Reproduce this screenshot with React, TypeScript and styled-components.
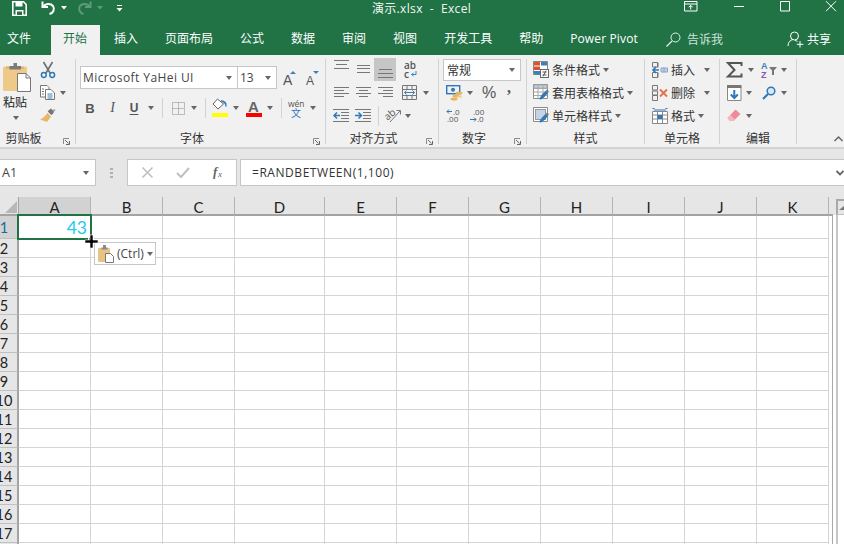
import React from "react";
import styled, { createGlobalStyle } from "styled-components";

const Global = createGlobalStyle`
  html, body { margin: 0; padding: 0; background: #e6e6e6; overflow: hidden; }
  * { box-sizing: border-box; }
`;
const FONT = `"Open Sans", "Noto Sans CJK SC", sans-serif`;
const GREEN = "#217346";

const Page = styled.div`
  width: 844px; height: 544px; overflow: hidden; background: #e6e6e6;
  font-family: ${FONT}; font-size: 12px; color: #333;
  display: flex; flex-direction: column;
`;
const TitleBar = styled.div`
  height: 25px; background: ${GREEN}; color: #fff;
  display: grid; grid-template-columns: 1fr auto 1fr; flex: none;
`;
const Qat = styled.div`display: flex; align-items: flex-start; padding: 1px 0 0 12px;`;
const QatItem = styled.span<{ $ml?: number; $mt?: number }>`
  display: inline-flex; margin-left: ${p => p.$ml ?? 0}px; margin-top: ${p => p.$mt ?? 0}px;
`;
const DocName = styled.div`font-size: 12px; line-height: 15px; letter-spacing: .35px; white-space: pre; color: #f2f7f4; margin-left: -1px; padding-top: 1px;`;
const WinButtons = styled.div`display: flex; justify-content: flex-end; padding: 1px 8px 0 0; gap: 36px;`;
const WinButton = styled.span`display: inline-flex; width: 10px; justify-content: center;`;

const TabBar = styled.div`
  height: 30px; background: ${GREEN}; display: flex; flex: none; align-items: stretch;
  margin-left: -5px; color: #fff; width: 849px;
`;
const Tab = styled.div<{ $active?: boolean; $mr?: number }>`
  padding: 0 13px 2px 12px; margin-right: ${p => p.$mr ?? 2}px;
  display: flex; align-items: center; white-space: pre; line-height: 16px;
  background: ${p => (p.$active ? "#f1f1f1" : "transparent")};
  color: ${p => (p.$active ? GREEN : "#fff")};
`;
const PowerTab = styled(Tab)`letter-spacing: .14px;`;
const TellMe = styled.div`display: flex; align-items: center; gap: 6px; margin-left: 13px; color: #cfe2d8; padding-bottom: 2px;`;
const Share = styled.div`display: flex; align-items: center; gap: 3px; margin-left: 64px; padding-bottom: 2px;`;

const Ribbon = styled.div`
  height: 94px; flex: none; background: #f1f1f1; border-bottom: 2px solid #d2d2d2;
  display: flex; align-items: stretch;
`;
const Group = styled.div<{ $w: number }>`
  width: ${p => p.$w}px; flex: none; display: flex; flex-direction: column;
`;
const Body = styled.div<{ $pt?: number; $pl?: number }>`
  height: 76px; flex: none; display: flex; flex-direction: column;
  padding-top: ${p => p.$pt ?? 3}px; padding-left: ${p => p.$pl ?? 0}px;
`;
const ClipBody = styled(Body)`flex-direction: row;`;
const PasteCol = styled.div`width: 36px; display: flex; flex-direction: column; padding: 5px 0 0 3px;`;
const PasteText = styled.div`font-size: 12px; line-height: 16px; margin-top: 3px; width: 26px; color: #222; letter-spacing: 0;`;
const PasteCaret = styled.div`display: flex; margin: 5px 0 0 10px;`;
const SmallCol = styled.div`display: flex; flex-direction: column;`;
const Row = styled.div<{ $h?: number; $mt?: number }>`
  height: ${p => p.$h ?? 23}px; margin-top: ${p => p.$mt ?? 0}px; display: flex; align-items: center; flex: none;
`;
const Tool = styled.span<{ $w: number; $ml?: number }>`
  width: ${p => p.$w}px; margin-left: ${p => p.$ml ?? 0}px; flex: none;
  display: inline-flex; align-items: center; justify-content: center; height: 100%;
`;
const Pressed = styled(Tool)`background: #c6c6c6;`;
const Caret = styled.span<{ $ml?: number }>`
  width: 0; height: 0; flex: none; margin-left: ${p => p.$ml ?? 0}px;
  border-left: 3.5px solid transparent; border-right: 3.5px solid transparent; border-top: 4px solid #666;
`;
const Label = styled.div`height: 15px; display: flex; align-items: center; line-height: 15px; color: #333;`;
const LabelText = styled.div<{ $pr?: number }>`flex: 1; text-align: center; padding-right: ${p => p.$pr ?? 0}px; white-space: nowrap;`;
const LauncherBox = styled.span`margin: 6px 5px 0 0; display: inline-flex;`;
const GroupSep = styled.div`width: 1px; flex: none; margin: 4px 0 3px; background: #d2d2d2;`;
const ToolSep = styled.span<{ $ml?: number; $mr?: number; $h?: number }>`
  width: 1px; height: ${p => p.$h ?? 20}px; background: #d2d2d2; flex: none;
  margin-left: ${p => p.$ml ?? 0}px; margin-right: ${p => p.$mr ?? 0}px;
`;
const Rest = styled.div`flex: 1; display: flex; align-items: flex-end; justify-content: flex-end; padding: 0 1px 5px 0;`;

const Field = styled.div<{ $w: number; $ml?: number }>`
  width: ${p => p.$w}px; height: 100%; background: #fff; border: 1px solid #c6c6c6; margin-left: ${p => p.$ml ?? 0}px;
  display: flex; align-items: center; justify-content: space-between; padding: 0 5px 0 2px; flex: none; color: #444;
`;
const FontName = styled.span`letter-spacing: .42px;`;
const NumberSelect = styled(Field)`height: 22px; color: #333; padding-left: 3px;`;
const BoldGlyph = styled.span`font: 700 13px "Liberation Sans", sans-serif; color: #555;`;
const ItalicGlyph = styled.span`font: italic 400 14px "Liberation Serif", serif; color: #555;`;
const UnderGlyph = styled.span`font: 700 12px "Liberation Sans", sans-serif; color: #555; text-decoration: underline; text-underline-offset: 2px;`;
const Percent = styled.span`font: 400 16px "Liberation Sans", sans-serif; color: #555;`;
const Comma = styled.span`font: 700 16px "Liberation Serif", serif; color: #555; margin-top: -9px;`;
const Action = styled.div<{ $pl: number }>`display: flex; align-items: center; gap: 3px; padding-left: ${p => p.$pl}px; height: 23px; color: #333; white-space: nowrap; flex: none;`;

const FormulaRow = styled.div`
  height: 27px; flex: none; margin-top: 10px; display: flex; align-items: stretch;
`;
const NameBox = styled.div`
  width: 96px; background: #fff; border: 1px solid #c6c6c6; border-left: none; display: flex; align-items: center;
  justify-content: space-between; padding: 0 6px 0 2px; font-size: 12.5px; color: #444;
`;
const Grip = styled.div`width: 31px; display: flex; align-items: center; justify-content: center;`;
const FxBox = styled.div`
  width: 110px; background: #fff; border: 1px solid #c6c6c6; display: grid; grid-template-columns: 36px 36px 36px; align-items: center; justify-items: center; padding-left: 1px;
`;
const FormulaInput = styled.div`
  margin-left: 3px; flex: 1; background: #fff; border: 1px solid #c6c6c6; border-right: none;
  display: flex; align-items: center; justify-content: space-between; padding: 0 0 0 11px; color: #333; font-size: 12px;
`;
const FormulaText = styled.span`letter-spacing: .55px;`;
const ExpandBox = styled.span`display: inline-flex; margin-right: 0;`;

const SheetWrap = styled.div`flex: 1; margin-top: 11px; position: relative; display: flex; min-height: 0;`;
const Sheet = styled.div`
  width: 833px; display: grid; flex: none; overflow: hidden; background: #fff; align-content: start;
  grid-template-columns: 19px 72px 72px 72px 90px repeat(7, 72px) 4px;
  grid-template-rows: 19px 23px repeat(17, 19px);
  font-family: Lato, "Open Sans", sans-serif;
`;
const Corner = styled.div`
  background: #e6e6e6; border-bottom: 2px solid #a3a3a3; border-right: 1px solid #a3a3a3; display: flex; align-items: flex-end; justify-content: flex-end; padding: 0 1px 1px 0;
`;
const ColHead = styled.div<{ $sel?: boolean }>`
  background: ${p => (p.$sel ? "#d2d2d2" : "#e6e6e6")}; border-right: 1px solid #b4b4b4; border-bottom: 2px solid #a3a3a3;
  color: #222; font-size: 15px; line-height: 20px; text-align: center;
`;
const HeadGutter = styled.div`background: #e6e6e6; border-bottom: 2px solid #a3a3a3;`;
const Gutter = styled.div`background: #fff; border-right: 1px solid #a8a8a8;`;
const RowHead = styled.div<{ $sel?: boolean }>`
  background: ${p => (p.$sel ? "#d2d2d2" : "#e6e6e6")}; border-right: 2px solid #a3a3a3; border-bottom: 1px solid #c0c0c0;
  color: #222; font-size: 14.5px; display: flex; align-items: center; padding-top: 2px;
`;
const RowNum = styled.span<{ $sel?: boolean }>`
  width: 8px; display: flex; justify-content: center; line-height: 18px; white-space: nowrap; flex: none;
  ${p => (p.$sel ? "color: #0f6fa0;" : "")}
`;
const Cell = styled.div`border-right: 1px solid #d4d4d4; border-bottom: 1px solid #d4d4d4; background: #fff;`;
const ValueCell = styled(Cell)`
  color: #22c8ef; font-size: 17.5px; line-height: 24px; text-align: right; padding-right: 3px;
`;
const SelBox = styled.div`
  position: absolute; left: 17px; top: 17px; width: 75px; height: 26px; border: 2px solid ${GREEN}; pointer-events: none;
`;
const FillHandle = styled.div`
  position: absolute; left: 88px; top: 40px; width: 6px; height: 6px; background: ${GREEN}; border: 1px solid #fff;
`;
const CursorMark = styled.span`position: absolute; left: 85px; top: 38px; display: inline-flex;`;
const PasteTag = styled.div`
  position: absolute; left: 94px; top: 45px; width: 62px; height: 23px; background: #fff; border: 1px solid #c6c6c6;
  display: flex; align-items: center; gap: 3px; padding-left: 3px; color: #444; font: 12px "Open Sans", sans-serif;
`;
const ScrollTrack = styled.div`flex: 1; display: flex; flex-direction: column; background: #fff;`;
const ScrollCap = styled.div`height: 18px; flex: none; background: #e6e6e6; padding: 2px 0 0 3px; display: flex;`;
const ScrollUp = styled.div`
  flex: 1; border-top: 2px solid #a8a8a8; border-left: 2px solid #a8a8a8; border-bottom: 1px solid #c0c0c0; background: #e6e6e6;
  display: flex; align-items: center; justify-content: flex-end; padding-right: 0;
`;
const ScrollRail = styled.div`flex: 1; margin-left: 3px; border-left: 2px solid #c6c6c6; background: #fff;`;

const Svg: React.FC<React.PropsWithChildren<{ w: number; h: number }>> = ({ w, h, children }) => (
  <svg width={w} height={h} viewBox={`0 0 ${w} ${h}`} style={{ display: "block", flex: "none", overflow: "visible" }}>{children}</svg>
);

const SaveIcon = () => (
  <Svg w={15} h={15}>
    <path d="M.8.8h10.7l2.700 2.700v10.700H.8z" fill="none" stroke="#fff" strokeWidth="1.600" />
    <path d="M3.500 1h7v4.500h-7zM3.500 9h8v5h-8z" fill="#fff" />
    <path d="M5 10.500h5v3.500H5z" fill={GREEN} />
  </Svg>
);
const UndoIcon = ({ dim }: { dim?: boolean }) => (
  <Svg w={15} h={14}>
    <g fill="none" stroke={dim ? "#5d9a7c" : "#fff"} strokeWidth="2" transform={dim ? "translate(15 0) scale(-1 1)" : undefined}>
      <path d="M1.500 .5v5.500h5.500" />
      <path d="M2 6C4 2.500 9.500 2 12 5c2 3 .5 7-3.500 8" />
    </g>
  </Svg>
);
const MiniCaret = ({ c = "#fff" }: { c?: string }) => (
  <Svg w={6} h={4}><path d="M0 0h6L3 3.500z" fill={c} /></Svg>
);
const QatMore = () => (
  <Svg w={7} h={7}><path d="M1 0h5v1H1zM.5 3h6L3.500 6.500z" fill="#fff" /></Svg>
);
const DisplayIcon = () => (
  <Svg w={14} h={11}>
    <path d="M.5.500h12.500v9.500H.5zM.5 3h12.500" fill="none" stroke="#fff" />
    <path d="M6.700 8.500V4.500M4.700 6.300l2-2 2 2" fill="none" stroke="#fff" />
  </Svg>
);
const MinIcon = () => <Svg w={10} h={11}><path d="M0 5.500h10" stroke="#fff" /></Svg>;
const MaxIcon = () => <Svg w={10} h={11}><path d="M.5.500h9v9.500h-9z" fill="none" stroke="#fff" /></Svg>;
const CloseIcon = () => <Svg w={10} h={11}><path d="M0 .2l10 10M10 .2l-10 10" stroke="#fff" /></Svg>;
const SearchIcon = () => (
  <Svg w={15} h={15}>
    <circle cx="9.500" cy="5.500" r="4.500" fill="none" stroke="#e6f0eb" />
    <path d="M6 9l-5.500 5.500" stroke="#e6f0eb" strokeWidth="1.300" />
  </Svg>
);
const PersonIcon = () => (
  <Svg w={17} h={17}>
    <circle cx="7.500" cy="5" r="4" fill="none" stroke="#fff" />
    <path d="M1 15c0-4 2.500-6 5-6.500M8 9.500c1 .2 2 .5 2.500 1" fill="none" stroke="#fff" />
    <path d="M13 10v6.500M9.800 13.300h6.500" stroke="#fff" />
  </Svg>
);

const PasteIcon = () => (
  <Svg w={28} h={29}>
    <rect x="0" y="3.500" width="24" height="24.500" rx="1.500" fill="#eec987" />
    <path d="M3 3.500h18v2.500H3z" fill="#dcb877" />
    <path d="M6.500 3h4V0h3.500v3h4v3.500h-11.500z" fill="#7a7a7a" />
    <path d="M14.500 10.500h8.500l4.500 4.500v13.500h-13z" fill="#fff" stroke="#777" />
    <path d="M23 10.500v4.500h4.500" fill="none" stroke="#777" />
  </Svg>
);
const CutIcon = () => (
  <Svg w={16} h={16}>
    <path d="M3.500 0l6.500 11M12.500 0L6 11" stroke="#6f6f6f" strokeWidth="1.600" />
    <circle cx="3.800" cy="13" r="2.400" fill="none" stroke="#2f78b9" strokeWidth="1.500" />
    <circle cx="12.200" cy="13" r="2.400" fill="none" stroke="#2f78b9" strokeWidth="1.500" />
  </Svg>
);
const CopyIcon = () => (
  <Svg w={15} h={15}>
    <path d="M.5.500h6.500l2 2v9.500H.5z" fill="#fff" stroke="#777" />
    <path d="M5.500 4.500h5.500l3.500 3.500v6.500h-9z" fill="#fff" stroke="#777" />
    <path d="M2 4h2M2 6.500h2M2 9h2" stroke="#777" />
    <path d="M7.500 9h5M7.500 11h5M7.500 13h5" stroke="#3b80bd" />
  </Svg>
);
const BrushIcon = () => (
  <Svg w={16} h={15}>
    <path d="M9 2l2-1.500 3 3-.8 2-2 1.500-3.500-3.500z" fill="#777" />
    <path d="M13.500 1l2 1-2 2z" fill="#8a8a8a" />
    <path d="M7.500 5l3.500 3.500L7 14 0 11.500C3 10.500 5 8 7.500 5z" fill="#e6b66d" />
  </Svg>
);
const Launcher = () => (
  <Svg w={7} h={7}>
    <path d="M.5 6V.5H6" fill="none" stroke="#8a8a8a" />
    <path d="M2 2l3.500 3.500M6.500 3v3.500H3" fill="none" stroke="#666" />
  </Svg>
);
const GrowIcon = ({ down }: { down?: boolean }) => (
  <Svg w={15} h={16}>
    <text x="1" y="14.500" fontFamily="Liberation Sans, sans-serif" fontSize={down ? 12 : 14} fill="#555">A</text>
    <path d={down ? "M8 1h6l-3 3z" : "M8 4l3-3 3 3z"} fill="#3b80bd" />
  </Svg>
);
const BordersIcon = () => (
  <Svg w={13} h={13}>
    <path d="M.5.500h12v12H.5zM6.500.500v12M.5 6.500h12" fill="none" stroke="#888" strokeDasharray="1 1" />
  </Svg>
);
const FillIcon = () => (
  <Svg w={16} h={20}>
    <path d="M5.500 1L1 6l5 5 5.500-5z" fill="#fff" stroke="#666" />
    <path d="M9 2c3 .5 5 1.500 5.500 3.500v3.500c-1 0-1.500-1-1.500-2.500C12 5 11 4 9 3.500z" fill="#3b80bd" />
    <rect x="0" y="15" width="16" height="4" fill="#ffff00" />
  </Svg>
);
const FontColorIcon = () => (
  <Svg w={16} h={20}>
    <text x="2" y="13.500" fontFamily="Liberation Sans, sans-serif" fontWeight="700" fontSize="15" fill="#666">A</text>
    <rect x="0" y="15" width="16" height="4" fill="#ff0000" />
  </Svg>
);
const WenIcon = () => (
  <Svg w={17} h={17}>
    <text x="0" y="7" fontFamily="Open Sans, sans-serif" fontSize="8.500" fill="#555">wén</text>
    <text x="3" y="17" fontFamily="Noto Sans CJK SC, sans-serif" fontSize="10" fill="#2f78b9">文</text>
  </Svg>
);
const Lines = ({ ys, xs }: { ys: number[]; xs: [number, number][] }) => (
  <Svg w={15} h={23}>
    {ys.map((y, i) => (
      <path key={y} d={`M${xs[i][0]} ${y}.5H${xs[i][1]}`} stroke="#777" />
    ))}
  </Svg>
);
const full: [number, number] = [0, 15];
const AlignTop = () => <Lines ys={[2, 6, 10]} xs={[full, [2, 13], full]} />;
const AlignMid = () => <Lines ys={[7, 10, 14]} xs={[[1, 14], [1, 14], [1, 14]]} />;
const AlignBot = () => <Lines ys={[11, 15, 19]} xs={[[1, 14], full, full]} />;
const AlignL = () => <Lines ys={[6, 9, 12, 15]} xs={[full, [0, 10], full, [0, 10]]} />;
const AlignC = () => <Lines ys={[6, 9, 12, 15]} xs={[full, [3, 12], full, [3, 12]]} />;
const AlignR = () => <Lines ys={[6, 9, 12, 15]} xs={[full, [5, 15], full, [5, 15]]} />;
const WrapIcon = () => (
  <Svg w={13} h={17}>
    <text x="0" y="8" fontFamily="Open Sans, sans-serif" fontWeight="600" fontSize="10" fill="#555">ab</text>
    <text x="0" y="16.500" fontFamily="Open Sans, sans-serif" fontWeight="600" fontSize="10" fill="#555">c</text>
    <path d="M12 10v3.500H8M9.500 12l-2 1.500 2 1.500" fill="none" stroke="#3b80bd" />
  </Svg>
);
const MergeIcon = () => (
  <Svg w={15} h={15}>
    <path d="M.5.500h14v14H.5zM.5 4.500h14M.5 10.500h14M5 .5v4M10 .5v4M5 10.500v4M10 10.500v4" fill="none" stroke="#777" />
    <path d="M2.500 7.500h10M4.500 5.500l-2 2 2 2M10.500 5.500l2 2-2 2" fill="none" stroke="#3b80bd" />
  </Svg>
);
const IndentIcon = ({ dir }: { dir: "in" | "out" }) => (
  <Svg w={16} h={13}>
    <path d="M0 .5h16M8 3.500h8M8 6.500h8M8 9.500h8M0 12.500h16" stroke="#777" />
    {dir === "out"
      ? <path d="M7 6.500H1M4 3.500l-3 3 3 3" fill="none" stroke="#2f78b9" strokeWidth="1.500" />
      : <path d="M0 6.500h6M3.500 3.500l3 3-3 3" fill="none" stroke="#2f78b9" strokeWidth="1.500" />}
  </Svg>
);
const OrientIcon = () => (
  <Svg w={17} h={15}>
    <text x="0" y="10" transform="rotate(-40 5 8)" fontFamily="Open Sans, sans-serif" fontSize="10" fill="#555">ab</text>
    <path d="M5 14L15 3M11.500 2.500H15.500V6.500" fill="none" stroke="#777" />
  </Svg>
);
const CurrencyIcon = () => (
  <Svg w={17} h={16}>
    <rect x=".7" y=".7" width="13" height="8" fill="none" stroke="#2f78b9" strokeWidth="1.400" />
    <circle cx="7" cy="4.700" r="2" fill="#2f78b9" />
    <ellipse cx="13" cy="8" rx="3.500" ry="1.500" fill="#e8b55a" />
    <ellipse cx="10" cy="11" rx="3.500" ry="1.500" fill="#e8b55a" />
    <ellipse cx="8" cy="14" rx="3.500" ry="1.500" fill="#e8b55a" />
    <path d="M11 10.500h5v2h-5z" fill="#f0cf8c" />
  </Svg>
);
const DecIcon = ({ inc }: { inc?: boolean }) => (
  <Svg w={16} h={15}>
    <text x={inc ? 7 : 3} y="6.500" fontFamily="Open Sans, sans-serif" fontSize="8" fill="#555">{inc ? ".0" : ".00"}</text>
    <text x={inc ? 1 : 7} y="14" fontFamily="Open Sans, sans-serif" fontSize="8" fill="#555">{inc ? ".00" : ".0"}</text>
    {inc
      ? <path d="M6 3.500H1M3 1.500l-2 2 2 2" fill="none" stroke="#2f78b9" />
      : <path d="M0 11.500h6M4 9.500l2 2-2 2" fill="none" stroke="#2f78b9" />}
  </Svg>
);
const CondIcon = () => (
  <Svg w={16} h={17}>
    <path d="M.5.500h14v13H.5z" fill="#fff" stroke="#888" />
    <rect x="1" y="1" width="6" height="3.500" fill="#d9542b" />
    <rect x="8" y="1" width="6" height="3.500" fill="#3b80bd" />
    <rect x="1" y="5.500" width="6" height="3.500" fill="#d9542b" />
    <rect x="1" y="10" width="6" height="3.500" fill="#3b80bd" />
    <rect x="7.500" y="8.500" width="8" height="8" fill="#fff" stroke="#666" />
    <path d="M9.500 11h4M9.500 14h4M13 9.800l-3 5.500" stroke="#555" />
  </Svg>
);
const TableIcon = ({ cell }: { cell?: boolean }) => (
  <Svg w={16} h={17}>
    <path d="M.5.500h14v14H.5z" fill="#fff" stroke="#8c8c8c" />
    {cell
      ? <rect x="2.500" y="2.500" width="10" height="10" fill="#c4d4e6" stroke="#999" />
      : <path d="M1 1h13v3H1z M.5 4.500h14M.5 8h14M.5 11.500h14M5 .5v14M10 .5v14" fill="#c4d4e6" stroke="#a8a8a8" />}
    <path d="M6 15l3-4.500 3.500-3.500 2.500 2-3.500 4-3.500 2.500z" fill="#2f78b9" />
    <path d="M12.500 7l1.500-1.500 2 2-1.500 1.500z" fill="#777" />
  </Svg>
);
const InsertCellIcon = () => (
  <Svg w={16} h={16}>
    <path d="M.5.500h5v4.500h-5zM.5 10.500h5v5h-5zM6 .5v5M6 10.500v5" fill="none" stroke="#777" />
    <path d="M9 6h6.500v4H9z" fill="#bcd0e6" stroke="#8aa6c6" />
    <path d="M12 5.500v5" stroke="#8aa6c6" />
    <path d="M7 8H1.500M4 5L1 8l3 3" fill="none" stroke="#2f78b9" strokeWidth="1.600" />
  </Svg>
);
const DeleteCellIcon = () => (
  <Svg w={16} h={16}>
    <path d="M.5.500h5v4.500h-5zM.5 10.500h5v5h-5zM.5 6h5v4h-5z" fill="none" stroke="#777" />
    <path d="M8 4.500l7 7M15 4.500l-7 7" stroke="#e0714d" strokeWidth="1.800" />
  </Svg>
);
const FormatCellIcon = () => (
  <Svg w={16} h={16}>
    <path d="M.5.500h2M13.500.5h2M2 2h12" stroke="#2f78b9" fill="none" />
    <path d="M.5 3.500h15v12H.5zM.5 7h15M.5 11h15M5.500 3.500v12M10.500 3.500v12" fill="#fff" stroke="#888" />
    <rect x="5.500" y="7" width="5" height="4" fill="#2f78b9" />
  </Svg>
);
const SigmaIcon = () => (
  <Svg w={15} h={16}>
    <path d="M14.500 4V1H1l6.500 7L1 14.500h13.500v-3" fill="none" stroke="#555" strokeWidth="2" />
  </Svg>
);
const SortIcon = () => (
  <Svg w={16} h={17}>
    <text x="0" y="8" fontFamily="Liberation Sans, sans-serif" fontWeight="700" fontSize="9" fill="#3b80bd">A</text>
    <text x="0" y="17" fontFamily="Liberation Sans, sans-serif" fontWeight="700" fontSize="9" fill="#8a54b8">Z</text>
    <path d="M8 6h8l-3 3.500v4.500h-2V9.500z" fill="#777" />
  </Svg>
);
const FillDownIcon = () => (
  <Svg w={15} h={16}>
    <path d="M.5 2.500h13.500v13H.5z" fill="#fff" stroke="#888" />
    <path d="M0 0h14.500v3H0z" fill="#777" />
    <path d="M7.300 5v8M3.800 9.500l3.500 3.500 3.500-3.500" fill="none" stroke="#2f78b9" strokeWidth="2" />
  </Svg>
);
const FindIcon = () => (
  <Svg w={14} h={14}>
    <circle cx="9" cy="5" r="3.800" fill="#dbe8f4" stroke="#2f78b9" strokeWidth="1.500" />
    <path d="M6 8l-5 5" stroke="#2f78b9" strokeWidth="2.200" />
  </Svg>
);
const EraserIcon = () => (
  <Svg w={14} h={13}>
    <path d="M8.500.500l5 4.500-7 7H3L.5 9z" fill="#ee8b9b" />
    <path d="M.5 9L3 12h3.500L8 10.500 3.500 6z" fill="#f4b7c0" />
  </Svg>
);
const ChevronUp = () => (
  <Svg w={9} h={6}><path d="M.5 5l4-4 4 4" fill="none" stroke="#666" strokeWidth="1.500" /></Svg>
);
const ChevronDown = () => (
  <Svg w={8} h={6}><path d="M.5 1l3.500 3.500L7.500 1" fill="none" stroke="#666" strokeWidth="1.800" /></Svg>
);
const GripIcon = () => (
  <Svg w={3} h={10}><path d="M0 0h3v2H0zM0 4h3v2H0zM0 8h3v2H0z" fill="#b0b0b0" /></Svg>
);
const XIcon = () => <Svg w={11} h={11}><path d="M.5.500l10 10M10.500.500l-10 10" stroke="#c0c0c0" strokeWidth="1.600" /></Svg>;
const CheckIcon = () => <Svg w={14} h={11}><path d="M1 6l4 4 8-9" fill="none" stroke="#c0c0c0" strokeWidth="2" /></Svg>;
const FxIcon = () => (
  <Svg w={12} h={13}>
    <text x="0" y="10" fontFamily="Liberation Serif, serif" fontStyle="italic" fontWeight="700" fontSize="13" fill="#666">f</text>
    <text x="5" y="11" fontFamily="Liberation Serif, serif" fontStyle="italic" fontSize="9" fill="#666">x</text>
  </Svg>
);
const CornerTri = () => <Svg w={12} h={12}><path d="M12 0v12H0z" fill="#b8b8b8" /></Svg>;
const ScrollArrow = () => <Svg w={5} h={4}><path d="M5 0v4H0z" fill="#777" /></Svg>;
const PlusCursor = () => (
  <Svg w={13} h={13}>
    <path d="M5 0h3v5h5v3H8v5H5V8H0V5h5z" fill="#000" stroke="#fff" strokeWidth=".6" />
  </Svg>
);
const PasteMini = () => (
  <Svg w={16} h={18}>
    <rect x="0" y="3" width="12" height="14" rx="1" fill="#e9c382" />
    <path d="M3.500 2.500h1.500V0h3v2.500h1.500v2h-6z" fill="#8a8a8a" />
    <path d="M7.500 8.500h5l3 3v6h-8z" fill="#fff" stroke="#777" />
  </Svg>
);

const COLS = ["A", "B", "C", "D", "E", "F", "G", "H", "I", "J", "K"];
const ROWS = Array.from({ length: 18 }, (_, i) => i + 1);

const Launch = () => <LauncherBox><Launcher /></LauncherBox>;

export default function App() {
  return (
    <Page>
      <Global />
      <TitleBar>
        <Qat>
          <SaveIcon />
          <QatItem $ml={14}><UndoIcon /></QatItem>
          <QatItem $ml={5} $mt={5}><MiniCaret /></QatItem>
          <QatItem $ml={10}><UndoIcon dim /></QatItem>
          <QatItem $ml={5} $mt={5}><MiniCaret c="#5d9a7c" /></QatItem>
          <QatItem $ml={13} $mt={4}><QatMore /></QatItem>
        </Qat>
        <DocName>{"演示.xlsx  -  Excel"}</DocName>
        <WinButtons>
          <QatItem><DisplayIcon /></QatItem>
          <WinButton><MinIcon /></WinButton>
          <WinButton><MaxIcon /></WinButton>
          <WinButton><CloseIcon /></WinButton>
        </WinButtons>
      </TitleBar>
      <TabBar>
        <Tab $mr={7}>文件</Tab>
        <Tab $active>开始</Tab>
        <Tab>插入</Tab>
        <Tab>页面布局</Tab>
        <Tab>公式</Tab>
        <Tab>数据</Tab>
        <Tab>审阅</Tab>
        <Tab>视图</Tab>
        <Tab>开发工具</Tab>
        <Tab>帮助</Tab>
        <PowerTab>Power Pivot</PowerTab>
        <TellMe><SearchIcon />告诉我</TellMe>
        <Share><PersonIcon />共享</Share>
      </TabBar>
      <Ribbon>
        <Group $w={75}>
          <ClipBody>
            <PasteCol>
              <PasteIcon />
              <PasteText>粘贴</PasteText>
              <PasteCaret><Caret /></PasteCaret>
            </PasteCol>
            <SmallCol>
              <Row><Tool $w={23}><CutIcon /></Tool></Row>
              <Row><Tool $w={22}><CopyIcon /></Tool><Caret $ml={2} /></Row>
              <Row><Tool $w={23}><BrushIcon /></Tool></Row>
            </SmallCol>
          </ClipBody>
          <Label><LabelText $pr={16}>剪贴板</LabelText><Launch /></Label>
        </Group>
        <GroupSep />
        <Group $w={249}>
          <Body $pt={11} $pl={4}>
            <Row>
              <Field $w={158}><FontName>Microsoft YaHei UI</FontName><Caret /></Field>
              <Field $w={40} $ml={-1}>13<Caret /></Field>
              <Tool $w={24}><GrowIcon /></Tool>
              <Tool $w={22}><GrowIcon down /></Tool>
            </Row>
            <Row $h={22} $mt={8}>
              <Tool $w={20}><BoldGlyph>B</BoldGlyph></Tool>
              <Tool $w={25}><ItalicGlyph>I</ItalicGlyph></Tool>
              <Tool $w={18}><UnderGlyph>U</UnderGlyph></Tool>
              <Tool $w={16}><Caret /></Tool>
              <ToolSep $ml={3} $mr={2} />
              <Tool $w={26}><BordersIcon /></Tool>
              <Tool $w={6}><Caret /></Tool>
              <ToolSep $ml={8} $mr={3} />
              <Tool $w={22}><FillIcon /></Tool>
              <Tool $w={10}><Caret /></Tool>
              <Tool $w={26}><FontColorIcon /></Tool>
              <Tool $w={6}><Caret /></Tool>
              <ToolSep $ml={8} />
              <Tool $w={28}><WenIcon /></Tool>
              <Tool $w={6}><Caret /></Tool>
            </Row>
          </Body>
          <Label><LabelText $pr={5}>字体</LabelText><Launch /></Label>
        </Group>
        <GroupSep />
        <Group $w={112}>
          <Body>
            <Row>
              <Tool $w={30}><AlignTop /></Tool>
              <Tool $w={14}><AlignMid /></Tool>
              <Pressed $w={22} $ml={4}><AlignBot /></Pressed>
              <Tool $w={28}><WrapIcon /></Tool>
            </Row>
            <Row>
              <Tool $w={30}><AlignL /></Tool>
              <Tool $w={14}><AlignC /></Tool>
              <Tool $w={30}><AlignR /></Tool>
              <Tool $w={18}><MergeIcon /></Tool>
              <Tool $w={16}><Caret /></Tool>
            </Row>
            <Row>
              <Tool $w={30}><IndentIcon dir="out" /></Tool>
              <Tool $w={14}><IndentIcon dir="in" /></Tool>
              <ToolSep $ml={8} $mr={3} />
              <Tool $w={22}><OrientIcon /></Tool>
              <Tool $w={8}><Caret /></Tool>
            </Row>
          </Body>
          <Label><LabelText $pr={5}>对齐方式</LabelText><Launch /></Label>
        </Group>
        <GroupSep />
        <Group $w={87}>
          <Body $pl={4}>
            <Row><NumberSelect $w={78}>常规<Caret /></NumberSelect></Row>
            <Row>
              <Tool $w={22}><CurrencyIcon /></Tool>
              <Tool $w={10}><Caret /></Tool>
              <Tool $w={28}><Percent>%</Percent></Tool>
              <Tool $w={12}><Comma>,</Comma></Tool>
            </Row>
            <Row>
              <Tool $w={21}><DecIcon inc /></Tool>
              <Tool $w={20} $ml={4}><DecIcon /></Tool>
            </Row>
          </Body>
          <Label><LabelText $pr={5}>数字</LabelText><Launch /></Label>
        </Group>
        <GroupSep />
        <Group $w={117}>
          <Body>
            <Action $pl={6}><CondIcon />条件格式<Caret $ml={0} /></Action>
            <Action $pl={6}><TableIcon />套用表格格式<Caret $ml={0} /></Action>
            <Action $pl={6}><TableIcon cell />单元格样式<Caret $ml={0} /></Action>
          </Body>
          <Label><LabelText>样式</LabelText></Label>
        </Group>
        <GroupSep />
        <Group $w={74}>
          <Body>
            <Action $pl={7}><InsertCellIcon />插入<Caret $ml={6} /></Action>
            <Action $pl={7}><DeleteCellIcon />删除<Caret $ml={6} /></Action>
            <Action $pl={7}><FormatCellIcon />格式<Caret $ml={0} /></Action>
          </Body>
          <Label><LabelText>单元格</LabelText></Label>
        </Group>
        <GroupSep />
        <Group $w={76}>
          <Body $pl={3}>
            <Row>
              <Tool $w={22}><SigmaIcon /></Tool>
              <Tool $w={12}><Caret /></Tool>
              <Tool $w={24}><SortIcon /></Tool>
              <Tool $w={6}><Caret /></Tool>
            </Row>
            <Row>
              <Tool $w={22}><FillDownIcon /></Tool>
              <Tool $w={8}><Caret /></Tool>
              <Tool $w={24} $ml={4}><FindIcon /></Tool>
              <Tool $w={6}><Caret /></Tool>
            </Row>
            <Row>
              <Tool $w={22}><EraserIcon /></Tool>
              <Tool $w={8}><Caret /></Tool>
            </Row>
          </Body>
          <Label><LabelText>编辑</LabelText></Label>
        </Group>
        <GroupSep />
        <Rest><ChevronUp /></Rest>
      </Ribbon>
      <FormulaRow>
        <NameBox>A1<Caret /></NameBox>
        <Grip><GripIcon /></Grip>
        <FxBox><XIcon /><CheckIcon /><FxIcon /></FxBox>
        <FormulaInput><FormulaText>=RANDBETWEEN(1,100)</FormulaText><ExpandBox><ChevronDown /></ExpandBox></FormulaInput>
      </FormulaRow>
      <SheetWrap>
        <Sheet>
          <Corner><CornerTri /></Corner>
          {COLS.map(c => <ColHead key={c} $sel={c === "A"}>{c}</ColHead>)}
          <HeadGutter />
          {ROWS.map(r => (
            <React.Fragment key={r}>
              <RowHead $sel={r === 1}><RowNum $sel={r === 1}>{r}</RowNum></RowHead>
              {COLS.map(c =>
                r === 1 && c === "A"
                  ? <ValueCell key={c}>43</ValueCell>
                  : <Cell key={c} />
              )}
              <Gutter />
            </React.Fragment>
          ))}
        </Sheet>
        <ScrollTrack>
          <ScrollCap><ScrollUp><ScrollArrow /></ScrollUp></ScrollCap>
          <ScrollRail />
        </ScrollTrack>
        <SelBox />
        <FillHandle />
        <PasteTag><PasteMini />(Ctrl)<Caret $ml={0} /></PasteTag>
        <CursorMark><PlusCursor /></CursorMark>
      </SheetWrap>
    </Page>
  );
}
